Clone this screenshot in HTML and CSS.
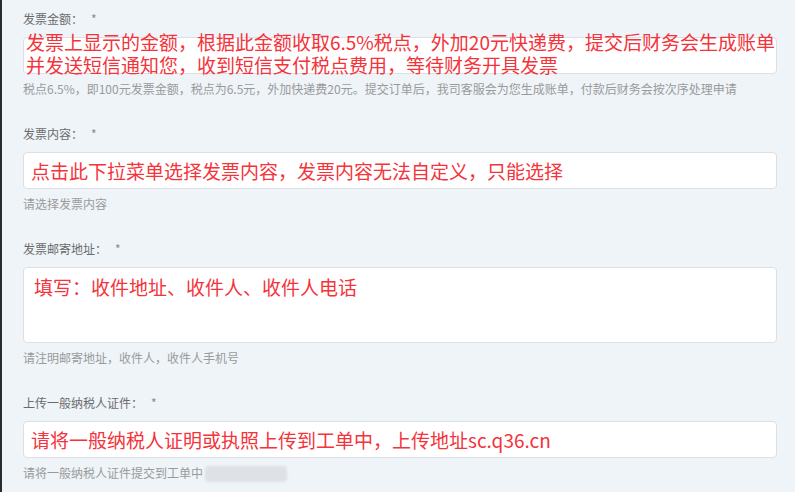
FILE: index.html
```html
<!DOCTYPE html>
<html lang="zh-CN">
<head>
    <meta charset="UTF-8">
    <meta name="viewport" content="width=device-width, initial-scale=1.0">
    <title>发票申请</title>
    <link rel="stylesheet" href="styles.css">
</head>
<body>

    <main class="form">

        <!-- 发票金额 -->
        <div class="field">
            <label class="field-label">发票金额：<span class="req">*</span></label>
            <div class="control">
                <div class="input"></div>
                <p class="note note-amount">发票上显示的金额，根据此金额收取6.5%税点，外加20元快递费，提交后财务会生成账单<br>并发送短信通知您，收到短信支付税点费用，等待财务开具发票</p>
            </div>
            <p class="help">税点6.5%，即100元发票金额，税点为6.5元，外加快递费20元。提交订单后，我司客服会为您生成账单，付款后财务会按次序处理申请</p>
        </div>

        <!-- 发票内容 -->
        <div class="field">
            <label class="field-label">发票内容：<span class="req">*</span></label>
            <div class="control">
                <div class="input"></div>
                <p class="note note-line">点击此下拉菜单选择发票内容，发票内容无法自定义，只能选择</p>
            </div>
            <p class="help">请选择发票内容</p>
        </div>

        <!-- 邮寄地址 -->
        <div class="field">
            <label class="field-label">发票邮寄地址：<span class="req">*</span></label>
            <div class="control">
                <div class="input textarea"></div>
                <p class="note note-address">填写：收件地址、收件人、收件人电话</p>
            </div>
            <p class="help">请注明邮寄地址，收件人，收件人手机号</p>
        </div>

        <!-- 纳税人证件 -->
        <div class="field">
            <label class="field-label">上传一般纳税人证件：<span class="req">*</span></label>
            <div class="control">
                <div class="input"></div>
                <p class="note note-line">请将一般纳税人证明或执照上传到工单中，上传地址sc.q36.cn</p>
            </div>
            <p class="help">请将一般纳税人证件提交到工单中<span class="masked"></span></p>
        </div>

    </main>

</body>
</html>
```

FILE: styles.css
```css
* {
    margin: 0;
    padding: 0;
    box-sizing: border-box;
    font-family: 'Noto Sans CJK SC', 'Noto Sans', sans-serif;
}

body {
    overflow: hidden;
    height: 100vh;
    background: #eef4f8;
    border-left: 2px solid #2b2b2b;
}

.form {
    width: 775px;
    padding: 9px 0 0 21px;
}

/* Mỗi ô nhập */
.field {
    margin-bottom: 25px;
}

.field-label {
    display: block;
    font-size: 12px;
    line-height: 20px;
    color: #6b6b6b;
    margin-bottom: 8px;
}

.field-label .req {
    margin-left: 8px;
    color: #8a8a8a;
}

.control {
    position: relative;
}

.input {
    height: 37px;
    background: #fff;
    border: 1px solid #dcdfe4;
    border-radius: 4px;
}

.input.textarea {
    height: 76px;
}

.help {
    margin-top: 5px;
    font-size: 12px;
    line-height: 20px;
    color: #9a9a9a;
    white-space: nowrap;
}

.help .masked {
    display: inline-block;
    width: 82px;
    height: 16px;
    margin-left: 2px;
    vertical-align: -4px;
    background: #dee2e6;
    border-radius: 4px;
    filter: blur(1px);
}

/* Chú thích màu đỏ đè lên ô */
.note {
    position: absolute;
    left: 8px;
    top: 7px;
    font-size: 19px;
    line-height: 23px;
    color: #f4333b;
    white-space: nowrap;
}

.note-amount {
    left: 3px;
    top: -7px;
}

.note-address {
    left: 11px;
    top: 8px;
}
```
